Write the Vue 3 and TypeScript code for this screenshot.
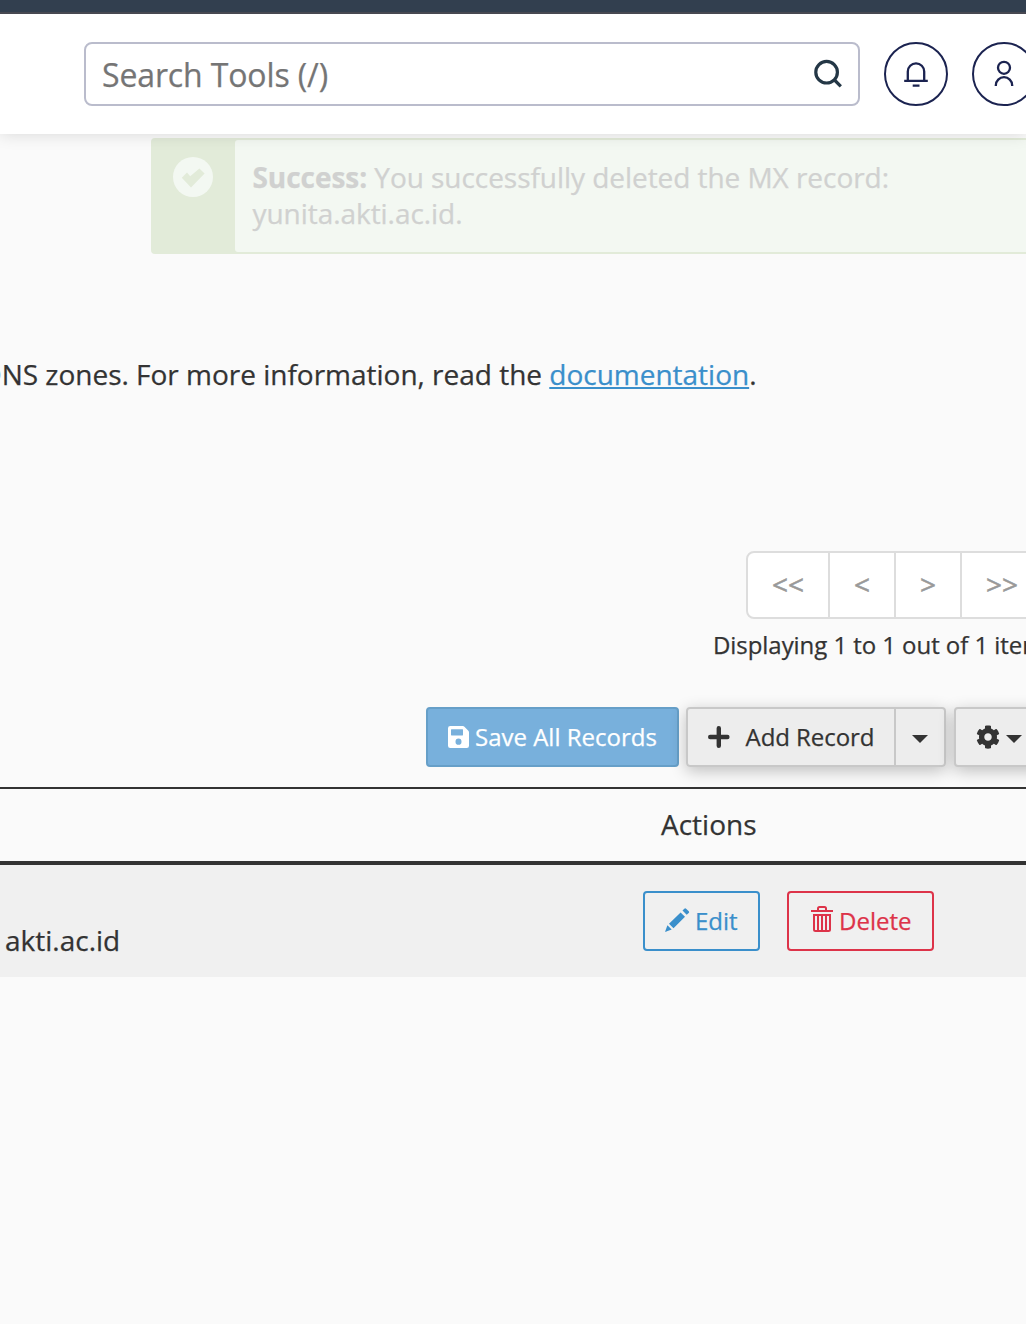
<script setup lang="ts">
import { ref } from 'vue'

const query = ref('')
const pages: string[] = ['<<', '<', '>', '>>']
</script>

<template>
  <div class="app">
    <div class="topbar"></div>
    <header class="header">
      <div class="search">
        <input v-model="query" type="text" placeholder="Search Tools (/)" aria-label="Search Tools" />
        <svg class="search-icon" width="32" height="32" viewBox="0 0 32 32" fill="none" stroke="#243746" stroke-width="3.200">
          <circle cx="14.6" cy="14.2" r="10.800" />
          <path d="M22 21.500 28.800 28.300" />
        </svg>
      </div>
      <button class="round" aria-label="Notifications">
        <svg width="32" height="32" viewBox="0 0 32 32" fill="none" stroke="#1b2350" stroke-width="2.300">
          <path d="M4.200 22.900H27.800M7.800 22.900V13.500a8.200 8.200 0 0 1 16.400 0V22.900M12.700 27.700h6.800" />
        </svg>
      </button>
      <button class="round" aria-label="Account">
        <svg width="32" height="32" viewBox="0 0 32 32" fill="none" stroke="#1b2350" stroke-width="2.300">
          <circle cx="16" cy="9.800" r="6" />
          <path d="M7.800 28v-.6a8.200 8.200 0 0 1 16.400 0v.6" />
        </svg>
      </button>
    </header>

    <main class="main">
      <section class="alert" role="status">
        <div class="alert-icon">
          <svg width="40" height="40" viewBox="0 0 40 40">
            <circle cx="20" cy="20" r="20" fill="#f3f8f2" />
            <path d="M8.800 20.800 14 15.600 17.200 19.200 26.400 11.600 31.600 16.600 18 30.400Z" fill="#e2ebd9" />
          </svg>
        </div>
        <p class="alert-text"><strong>Success:</strong> You successfully deleted the MX record:<br />yunita.akti.ac.id.</p>
      </section>

      <p class="intro"><span>DNS zones. For more information, read the <a href="#">documentation</a>.</span></p>

      <nav class="pager">
        <button v-for="p in pages" :key="p" disabled>{{ p }}</button>
      </nav>
      <p class="count">Displaying 1 to 1 out of 1 items</p>

      <div class="toolbar">
        <button class="btn save">
          <svg width="21" height="22" viewBox="0 0 448 448" preserveAspectRatio="none" fill="currentColor">
            <path d="M433.9 97.9 350.1 14.1A48 48 0 0 0 316.1 0H48A48 48 0 0 0 0 48v352a48 48 0 0 0 48 48h352a48 48 0 0 0 48-48V131.9a48 48 0 0 0-14.1-34zM224 384a64 64 0 1 1 0-128 64 64 0 0 1 0 128zM320 79.5V180a12 12 0 0 1-12 12H76a12 12 0 0 1-12-12V76a12 12 0 0 1 12-12h228.500a12 12 0 0 1 8.500 3.500l3.500 3.500a12 12 0 0 1 3.500 8.500z" />
          </svg>
          <span>Save All Records</span>
        </button>
        <div class="group">
          <button class="btn add">
            <svg width="22" height="22" viewBox="0 0 22 22" fill="none" stroke="currentColor" stroke-width="4.400" stroke-linecap="round">
              <path d="M2.200 11h17.200M10.800 2.300v17.400" />
            </svg>
            <span>Add Record</span>
          </button>
          <button class="btn more" aria-label="More record types"><i class="caret"></i></button>
        </div>
        <button class="btn gear" aria-label="Settings">
          <svg width="24" height="24" viewBox="0 0 512 512" fill="currentColor">
            <path d="M487.400 315.700l-42.600-24.600c4.300-23.200 4.300-47 0-70.200l42.600-24.600c4.900-2.800 7.100-8.600 5.500-14-11.100-35.600-30-67.800-54.700-94.600-3.800-4.100-10-5.100-14.800-2.300L380.800 110c-17.900-15.400-38.500-27.300-60.800-35.100V25.800c0-5.600-3.900-10.500-9.400-11.700-36.700-8.200-74.300-7.800-109.200 0-5.500 1.200-9.400 6.100-9.400 11.700V75c-22.200 7.900-42.800 19.800-60.800 35.100L88.700 85.500c-4.900-2.800-11-1.900-14.800 2.300-24.700 26.700-43.600 58.900-54.700 94.600-1.700 5.400.6 11.200 5.500 14L67.300 221c-4.300 23.200-4.300 47 0 70.200l-42.600 24.600c-4.900 2.800-7.100 8.600-5.500 14 11.100 35.600 30 67.800 54.700 94.600 3.800 4.100 10 5.100 14.800 2.300l42.600-24.600c17.900 15.400 38.500 27.300 60.800 35.100v49.200c0 5.600 3.900 10.500 9.400 11.700 36.700 8.200 74.300 7.800 109.200 0 5.500-1.200 9.400-6.100 9.400-11.700v-49.200c22.200-7.900 42.800-19.800 60.800-35.100l42.600 24.600c4.900 2.800 11 1.900 14.800-2.300 24.700-26.700 43.600-58.900 54.700-94.600 1.500-5.500-.7-11.300-5.600-14.100zM256 336c-44.100 0-80-35.900-80-80s35.900-80 80-80 80 35.900 80 80-35.900 80-80 80z" />
          </svg>
          <i class="caret"></i>
        </button>
      </div>

      <div class="table">
        <div class="thead"><span>Actions</span></div>
        <div class="row">
          <span class="zone">akti.ac.id</span>
          <button class="btn edit">
            <svg width="26" height="26" viewBox="0 0 26 26" fill="currentColor">
              <path d="M1 25 3.400 18.200 7.700 22.500ZM5 16.800 16.600 5.400 21 9.700 9.500 21.200ZM18.500 3.600 20.300 1.700Q21.200.8 22.100 1.700L24.800 4.300Q25.600 5.200 24.700 6.100L22.700 7.800Z" />
            </svg>
            <span>Edit</span>
          </button>
          <button class="btn delete">
            <svg width="22" height="26" viewBox="0 0 22 26" fill="none" stroke="currentColor" stroke-width="2">
              <path d="M0 5H22M7 5V2.500Q7 1 8.500 1H13.500Q15 1 15 2.500V5M3 8V23.500Q3 25 4.500 25H17.500Q19 25 19 23.500V9H3M7 9V25M11 9V25M15 9V25" />
            </svg>
            <span>Delete</span>
          </button>
        </div>
      </div>
    </main>
  </div>
</template>

<style>
body {
  margin: 0;
  background: #fafafa;
}
</style>

<style scoped>
.app {
  width: 1026px;
  height: 1324px;
  overflow: hidden;
  background: #fafafa;
  color: #333;
  font-family: 'Open Sans', 'Noto Sans', sans-serif;
  font-size: 28px;
  -webkit-text-stroke: 0.25px currentColor;
}
.app * {
  box-sizing: border-box;
}
svg {
  flex: none;
}
p {
  margin: 0;
}
button {
  margin: 0;
  font: inherit;
  color: inherit;
}
.topbar {
  height: 14px;
  background: #323f4f;
  border-bottom: 2px solid #474851;
  box-sizing: border-box;
}
.header {
  position: relative;
  z-index: 1;
  display: flex;
  gap: 24px;
  height: 120px;
  padding: 28px 0 0 84px;
  background: #fff;
  box-shadow: 0 0 16px rgba(0, 0, 0, 0.14);
  clip-path: inset(0 0 -30px 0);
}
.search {
  display: flex;
  flex: none;
  align-items: center;
  width: 776px;
  height: 64px;
  padding: 0 14px 0 16px;
  border: 2px solid #babccc;
  border-radius: 8px;
}
.search input {
  flex: 1;
  min-width: 0;
  height: 56px;
  padding: 0;
  border: 0;
  outline: 0;
  background: none;
  font: inherit;
  font-size: 32px;
  letter-spacing: -0.13px;
}
.search input::placeholder {
  color: #757575;
}
.round {
  display: flex;
  flex: none;
  align-items: center;
  justify-content: center;
  width: 64px;
  height: 64px;
  padding: 0;
  border: 2px solid #1b2350;
  border-radius: 50%;
  background: #fff;
}
.alert {
  display: flex;
  width: 900px;
  height: 116px;
  margin: 4px 0 0 151px;
  border: 2px solid #e2ebd9;
  border-radius: 4px;
  background: #e2ebd9;
}
.alert-icon {
  flex: none;
  width: 82px;
  padding: 17px 0 0 20px;
}
.alert-text {
  flex: 1;
  padding: 19px 17.500px;
  border-radius: 3px 0 0 3px;
  background: #f3f8f2;
  color: #d0d1d0;
  line-height: 36px;
  letter-spacing: -0.05px;
  white-space: nowrap;
}
.intro {
  display: flex;
  justify-content: flex-end;
  width: 756.500px;
  margin-top: 100px;
  line-height: 40px;
  white-space: nowrap;
}
.intro span {
  letter-spacing: -0.01px;
}
.intro a {
  color: #3a8fcb;
  text-decoration: underline;
  text-decoration-thickness: 2px;
  text-underline-offset: 2px;
}
.pager {
  display: flex;
  margin: 157px 0 0 746px;
}
.pager button {
  flex: none;
  width: 68px;
  height: 68px;
  margin-right: -2px;
  padding: 0 0 2px;
  border: 2px solid #ddd;
  background: #fff;
  color: #999;
  -webkit-text-stroke-width: 0.5px;
}
.pager button:first-child,
.pager button:last-child {
  width: 84px;
}
.pager button:first-child {
  border-radius: 8px 0 0 8px;
}
.count {
  margin: 8px 0 0 713px;
  font-size: 24px;
  line-height: 36px;
  letter-spacing: -0.06px;
  white-space: nowrap;
}
.toolbar {
  display: flex;
  height: 60px;
  margin: 44px 0 0 426px;
}
.btn {
  display: flex;
  flex: none;
  align-items: center;
  height: 60px;
  padding: 0;
  border: 2px solid #c8c8c8;
  border-radius: 4px;
  background: #ededed;
  font-size: 24px;
  line-height: 36px;
  white-space: nowrap;
}
.save {
  gap: 6px;
  width: 253px;
  padding-left: 20px;
  border-color: #669fc8;
  background: #78b0dc;
  color: #fff;
}
.group {
  display: flex;
  flex: none;
  margin: 0 8px 0 7px;
  border-radius: 4px;
  box-shadow: 0 4px 16px rgba(0, 0, 0, 0.24);
}
.add {
  gap: 15.500px;
  width: 210px;
  padding-left: 20px;
  border-radius: 4px 0 0 4px;
}
.add span {
  letter-spacing: -0.05px;
}
.more {
  justify-content: center;
  width: 52px;
  margin-left: -2px;
  border-radius: 0 4px 4px 0;
}
.gear {
  gap: 6px;
  width: 92px;
  padding-left: 20px;
  box-shadow: 0 4px 16px rgba(0, 0, 0, 0.24);
}
.caret {
  width: 0;
  border: 8px solid transparent;
  border-top-color: #333;
  border-bottom: 0;
  margin-top: 3px;
}
.table {
  margin-top: 20px;
}
.thead {
  height: 78px;
  padding: 15px 0 0 661px;
  border-top: 2px solid #333;
  border-bottom: 4px solid #333;
  line-height: 40px;
}
.row {
  display: flex;
  align-items: flex-start;
  height: 112px;
  padding-top: 26px;
  background: #f0f0f0;
}
.zone {
  width: 638px;
  margin: 29px 0 0 5px;
  line-height: 40px;
}
.edit {
  gap: 5px;
  width: 117px;
  margin-right: 27px;
  padding-left: 19px;
  border-color: #3a8fcb;
  background: none;
  color: #3a8fcb;
}
.delete {
  gap: 6px;
  width: 147px;
  padding-left: 22px;
  border-color: #dd3349;
  background: none;
  color: #dd3349;
}
.edit svg {
  margin-top: -3px;
}
.delete svg {
  margin-top: -4px;
}
</style>
